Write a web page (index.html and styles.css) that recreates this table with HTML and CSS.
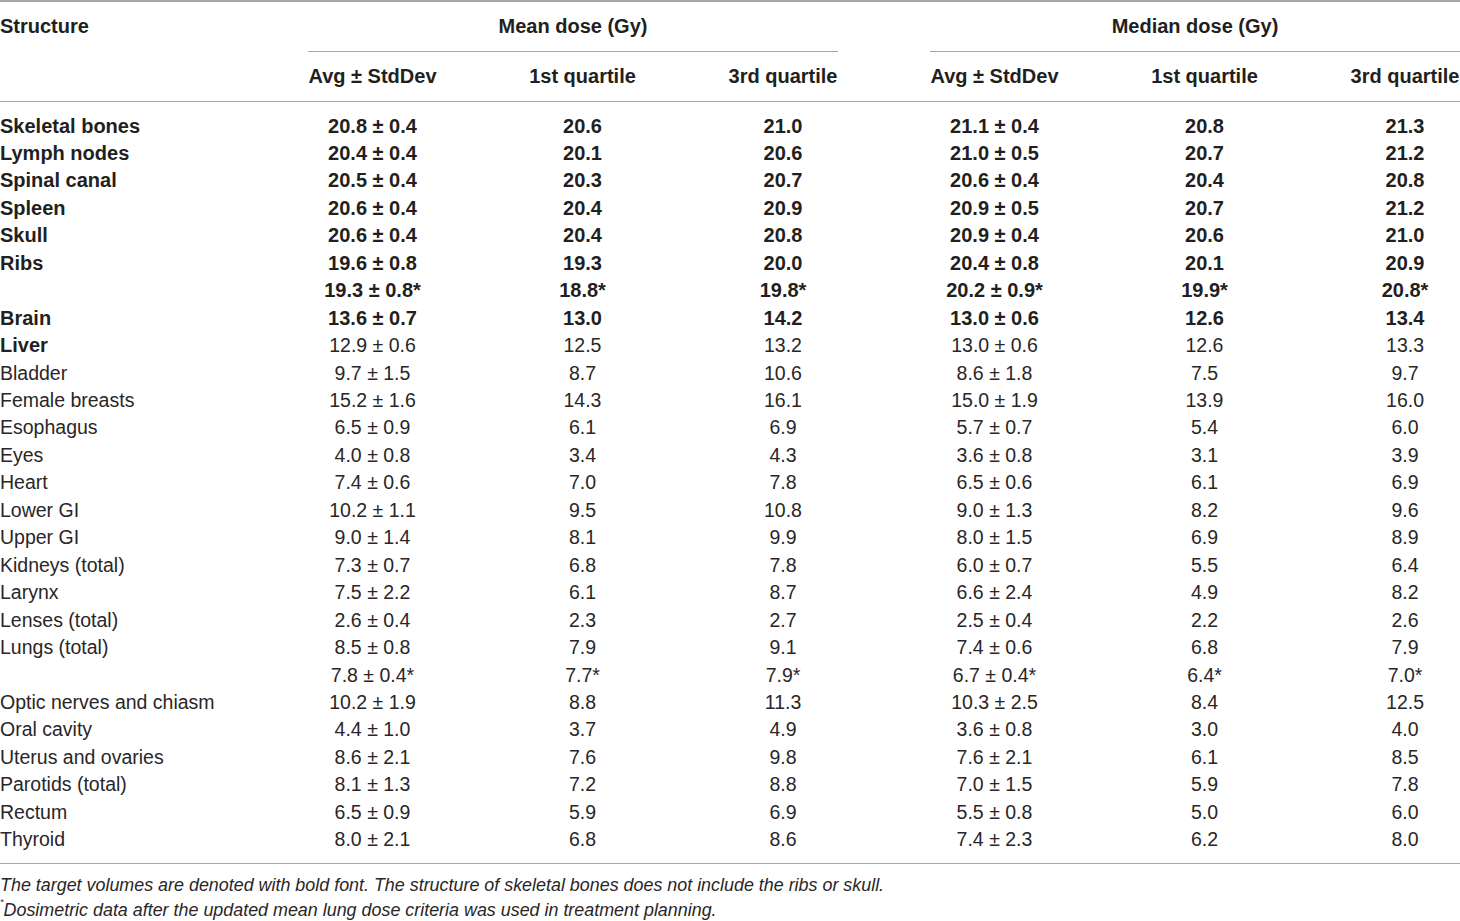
FILE: index.html
```html
<!DOCTYPE html>
<html>
<head>
<meta charset="utf-8">
<link rel="stylesheet" href="styles.css">
</head>
<body>
<div class="wrap">
<table class="dose">
  <colgroup>
    <col class="c-name"><col class="c-avg"><col class="c-q1"><col class="c-q3"><col class="c-gap"><col class="c-avg"><col class="c-q1"><col class="c-q3">
  </colgroup>
  <thead>
    <tr class="h1">
      <th class="name">Structure</th>
      <th colspan="3" class="group">Mean dose (Gy)</th>
      <th class="gap"></th>
      <th colspan="3" class="group">Median dose (Gy)</th>
    </tr>
    <tr class="h2">
      <th class="name"></th>
      <th>Avg ± StdDev</th><th>1st quartile</th><th>3rd quartile</th>
      <th class="gap"></th>
      <th>Avg ± StdDev</th><th>1st quartile</th><th>3rd quartile</th>
    </tr>
  </thead>
  <tbody>
    <tr class="spacer"><td colspan="8"></td></tr>
    <tr class="b"><td class="name">Skeletal bones</td><td>20.8 ± 0.4</td><td>20.6</td><td>21.0</td><td></td><td>21.1 ± 0.4</td><td>20.8</td><td>21.3</td></tr>
    <tr class="b"><td class="name">Lymph nodes</td><td>20.4 ± 0.4</td><td>20.1</td><td>20.6</td><td></td><td>21.0 ± 0.5</td><td>20.7</td><td>21.2</td></tr>
    <tr class="b"><td class="name">Spinal canal</td><td>20.5 ± 0.4</td><td>20.3</td><td>20.7</td><td></td><td>20.6 ± 0.4</td><td>20.4</td><td>20.8</td></tr>
    <tr class="b"><td class="name">Spleen</td><td>20.6 ± 0.4</td><td>20.4</td><td>20.9</td><td></td><td>20.9 ± 0.5</td><td>20.7</td><td>21.2</td></tr>
    <tr class="b"><td class="name">Skull</td><td>20.6 ± 0.4</td><td>20.4</td><td>20.8</td><td></td><td>20.9 ± 0.4</td><td>20.6</td><td>21.0</td></tr>
    <tr class="b"><td class="name">Ribs</td><td>19.6 ± 0.8</td><td>19.3</td><td>20.0</td><td></td><td>20.4 ± 0.8</td><td>20.1</td><td>20.9</td></tr>
    <tr class="b"><td class="name"></td><td>19.3 ± 0.8*</td><td>18.8*</td><td>19.8*</td><td></td><td>20.2 ± 0.9*</td><td>19.9*</td><td>20.8*</td></tr>
    <tr class="b"><td class="name">Brain</td><td>13.6 ± 0.7</td><td>13.0</td><td>14.2</td><td></td><td>13.0 ± 0.6</td><td>12.6</td><td>13.4</td></tr>
    <tr><td class="name bold">Liver</td><td>12.9 ± 0.6</td><td>12.5</td><td>13.2</td><td></td><td>13.0 ± 0.6</td><td>12.6</td><td>13.3</td></tr>
    <tr><td class="name">Bladder</td><td>9.7 ± 1.5</td><td>8.7</td><td>10.6</td><td></td><td>8.6 ± 1.8</td><td>7.5</td><td>9.7</td></tr>
    <tr><td class="name">Female breasts</td><td>15.2 ± 1.6</td><td>14.3</td><td>16.1</td><td></td><td>15.0 ± 1.9</td><td>13.9</td><td>16.0</td></tr>
    <tr><td class="name">Esophagus</td><td>6.5 ± 0.9</td><td>6.1</td><td>6.9</td><td></td><td>5.7 ± 0.7</td><td>5.4</td><td>6.0</td></tr>
    <tr><td class="name">Eyes</td><td>4.0 ± 0.8</td><td>3.4</td><td>4.3</td><td></td><td>3.6 ± 0.8</td><td>3.1</td><td>3.9</td></tr>
    <tr><td class="name">Heart</td><td>7.4 ± 0.6</td><td>7.0</td><td>7.8</td><td></td><td>6.5 ± 0.6</td><td>6.1</td><td>6.9</td></tr>
    <tr><td class="name">Lower GI</td><td>10.2 ± 1.1</td><td>9.5</td><td>10.8</td><td></td><td>9.0 ± 1.3</td><td>8.2</td><td>9.6</td></tr>
    <tr><td class="name">Upper GI</td><td>9.0 ± 1.4</td><td>8.1</td><td>9.9</td><td></td><td>8.0 ± 1.5</td><td>6.9</td><td>8.9</td></tr>
    <tr><td class="name">Kidneys (total)</td><td>7.3 ± 0.7</td><td>6.8</td><td>7.8</td><td></td><td>6.0 ± 0.7</td><td>5.5</td><td>6.4</td></tr>
    <tr><td class="name">Larynx</td><td>7.5 ± 2.2</td><td>6.1</td><td>8.7</td><td></td><td>6.6 ± 2.4</td><td>4.9</td><td>8.2</td></tr>
    <tr><td class="name">Lenses (total)</td><td>2.6 ± 0.4</td><td>2.3</td><td>2.7</td><td></td><td>2.5 ± 0.4</td><td>2.2</td><td>2.6</td></tr>
    <tr><td class="name">Lungs (total)</td><td>8.5 ± 0.8</td><td>7.9</td><td>9.1</td><td></td><td>7.4 ± 0.6</td><td>6.8</td><td>7.9</td></tr>
    <tr><td class="name"></td><td>7.8 ± 0.4*</td><td>7.7*</td><td>7.9*</td><td></td><td>6.7 ± 0.4*</td><td>6.4*</td><td>7.0*</td></tr>
    <tr><td class="name">Optic nerves and chiasm</td><td>10.2 ± 1.9</td><td>8.8</td><td>11.3</td><td></td><td>10.3 ± 2.5</td><td>8.4</td><td>12.5</td></tr>
    <tr><td class="name">Oral cavity</td><td>4.4 ± 1.0</td><td>3.7</td><td>4.9</td><td></td><td>3.6 ± 0.8</td><td>3.0</td><td>4.0</td></tr>
    <tr><td class="name">Uterus and ovaries</td><td>8.6 ± 2.1</td><td>7.6</td><td>9.8</td><td></td><td>7.6 ± 2.1</td><td>6.1</td><td>8.5</td></tr>
    <tr><td class="name">Parotids (total)</td><td>8.1 ± 1.3</td><td>7.2</td><td>8.8</td><td></td><td>7.0 ± 1.5</td><td>5.9</td><td>7.8</td></tr>
    <tr><td class="name">Rectum</td><td>6.5 ± 0.9</td><td>5.9</td><td>6.9</td><td></td><td>5.5 ± 0.8</td><td>5.0</td><td>6.0</td></tr>
    <tr><td class="name">Thyroid</td><td>8.0 ± 2.1</td><td>6.8</td><td>8.6</td><td></td><td>7.4 ± 2.3</td><td>6.2</td><td>8.0</td></tr>
    <tr class="spacer-end"><td colspan="8"></td></tr>
  </tbody>
</table>
<div class="notes">
  <p>The target volumes are denoted with bold font. The structure of skeletal bones does not include the ribs or skull.</p>
  <p><sup>*</sup>Dosimetric data after the updated mean lung dose criteria was used in treatment planning.</p>
</div>
</div>
</body>
</html>
```
FILE: styles.css
```css
html, body {
  margin: 0;
  padding: 0;
  background: #ffffff;
}
body {
  font-family: "Liberation Sans", Arial, sans-serif;
  color: #231f20;
  width: 1460px;
}
.dose {
  width: 1460px;
  border-collapse: collapse;
  table-layout: fixed;
  border-top: 2px solid #a7a7a7;
  border-bottom: 1.5px solid #a7a7a7;
}
.c-name { width: 308px; }
.c-avg { width: 129px; }
.c-q1 { width: 291px; }
.c-q3 { width: 110px; }
.c-gap { width: 92px; }
.dose th {
  font-weight: bold;
  font-size: 20px;
  padding: 0;
  text-align: center;
  white-space: nowrap;
}
.dose .name {
  text-align: left;
}
.h1 th {
  height: 49px;
}
.h1 th.group {
  border-bottom: 1.5px solid #a7a7a7;
}
.h2 th {
  height: 49px;
}
.h2 {
  border-bottom: 1.5px solid #a7a7a7;
}
.dose td {
  font-size: 19.5px;
  padding: 0;
  height: 27.46px;
  line-height: 27.46px;
  text-align: center;
  white-space: nowrap;
  color: #2a2627;
}
.dose tr.b td, .dose td.bold {
  font-weight: bold;
  font-size: 20px;
  color: #231f20;
}
.dose tr.spacer td {
  height: 10.5px;
  line-height: 0;
}
.dose tr.spacer-end td {
  height: 9px;
  line-height: 0;
}
.notes {
  padding-top: 9px;
}
.notes p {
  margin: 0;
  font-style: italic;
  font-size: 17.9px;
  line-height: 25px;
  color: #2a2627;
}
.notes sup {
  font-size: 9px;
  vertical-align: top;
  line-height: 0;
  position: relative;
  top: 4px;
}
```
